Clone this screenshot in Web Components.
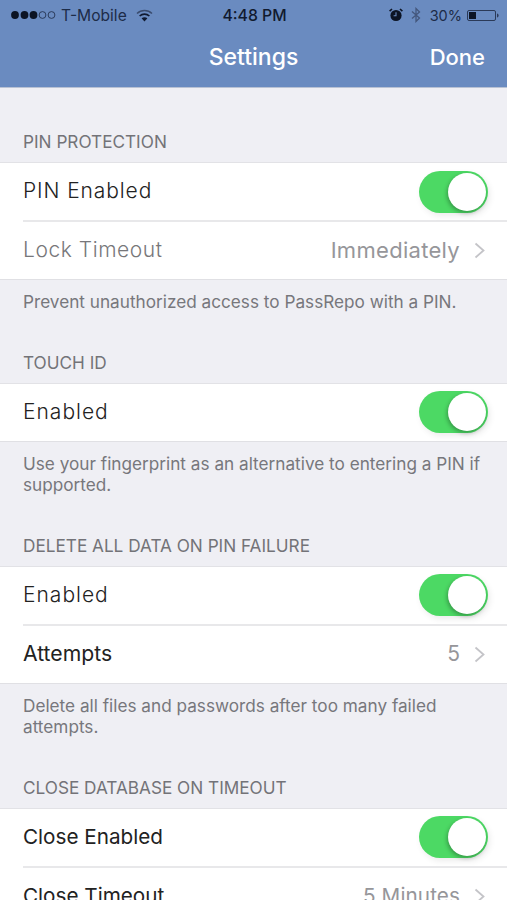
<!DOCTYPE html>
<html>
<head>
<meta charset="utf-8">
<style>
html, body { margin: 0; height: 900px; overflow: hidden; }
body { background: #efeff4; font-family: Inter, "Liberation Sans", sans-serif; }
</style>
</head>
<body>
<settings-screen>
  <nav-bar></nav-bar>
  <settings-section title="PIN PROTECTION" note="Prevent unauthorized access to PassRepo with a PIN." style="--top:44px">
    <settings-row label="PIN Enabled" toggle style="--label-size:21px;--label-ls:.9px;--label-weight:350"></settings-row>
    <settings-row label="Lock Timeout" value="Immediately" dim style="--label-size:21px;--label-ls:.55px;--label-weight:350;--value-size:22px;--value-ls:.3px"></settings-row>
  </settings-section>
  <settings-section title="TOUCH ID" note="Use your fingerprint as an alternative to entering a PIN if supported.">
    <settings-row label="Enabled" toggle style="--label-size:21px;--label-ls:1px;--label-weight:350"></settings-row>
  </settings-section>
  <settings-section title="DELETE ALL DATA ON PIN FAILURE" note="Delete all files and passwords after too many failed attempts.">
    <settings-row label="Enabled" toggle style="--label-size:21px;--label-ls:1px;--label-weight:350"></settings-row>
    <settings-row label="Attempts" value="5" style="--label-size:21.2px"></settings-row>
  </settings-section>
  <settings-section title="CLOSE DATABASE ON TIMEOUT">
    <settings-row label="Close Enabled" toggle></settings-row>
    <settings-row label="Close Timeout" value="5 Minutes" style="--value-size:20.7px"></settings-row>
  </settings-section>
</settings-screen>
<script>
class SettingsScreen extends HTMLElement {
    connectedCallback() {
        const shadow = this.attachShadow({mode:"open"});
        shadow.innerHTML = `
        <style>
        :host { display: flex; flex-direction: column; height: 900px; overflow: hidden; }
        </style>
        <slot></slot>
        `;
    }
}

class NavBar extends HTMLElement {
    connectedCallback() {
        const shadow = this.attachShadow({mode:"open"});
        shadow.innerHTML = `
        <style>
        :host { display: block; flex: none; height: 87px; background: #6a8bc0; border-bottom: 1px solid #b9c2d4; }
        .status { display: grid; grid-template-columns: 1fr auto 1fr; align-items: center; height: 30px; padding: 0 8px 0 10px; color: #16233c; font-size: 14.5px; }
        .left, .right { display: flex; align-items: center; }
        .right { justify-content: flex-end; }
        .carrier { margin-left: 5px; font-size: 15.6px; color: #1d2c48; }
        .wifi { margin-left: 9px; }
        .time { font-weight: 500; font-size: 15.8px; color: #111a2e; }
        .pct { margin: 0 5px 0 9px; color: #1d2c48; }
        .title { display: grid; grid-template-columns: 1fr auto 1fr; align-items: center; height: 54px; color: #fff; font-size: 23px; font-weight: 500; }
        .done { justify-self: end; padding-right: 22px; font-size: 22px; }
        svg { display: block; }
        </style>
        <div class="status">
          <div class="left">
            <svg width="46" height="10" viewBox="0 0 46 10">
              <circle cx="5" cy="5" r="3.9" fill="#0c1424"/><circle cx="14.5" cy="5" r="3.9" fill="#0c1424"/><circle cx="23.5" cy="5" r="3.9" fill="#0c1424"/>
              <circle cx="32.5" cy="5" r="3.4" fill="none" stroke="#24324f" stroke-width=".9"/><circle cx="41.5" cy="5" r="3.4" fill="none" stroke="#24324f" stroke-width=".9"/>
            </svg>
            <span class="carrier">T-Mobile</span>
            <svg class="wifi" width="17" height="13" viewBox="0 0 17 13">
              <path d="M1 4.5C5.2.6 11.8.6 16 4.5" fill="none" stroke="#3a4c6e" stroke-width="1.5"/>
              <path d="M3.6 7C6.4 4.5 10.6 4.5 13.4 7" fill="none" stroke="#101a30" stroke-width="1.6"/>
              <path d="M8.5 12.5L5.6 9.3C7.3 7.9 9.7 7.9 11.4 9.3Z" fill="#101a30"/>
            </svg>
          </div>
          <div class="time">4:48 PM</div>
          <div class="right">
            <svg width="14" height="14" viewBox="0 0 14 14">
              <circle cx="7" cy="7.5" r="5.6" fill="#0c1424"/>
              <path d="M7 4.2V7.8H4.6" fill="none" stroke="#6a8bc0" stroke-width="1.1"/>
              <path d="M.6 3.2L3 1M13.4 3.2L11 1" stroke="#0c1424" stroke-width="1.6"/>
            </svg>
            <svg style="margin-left:8px" width="10" height="16" viewBox="0 0 10 16">
              <path d="M1 4.5L8.5 11L5 14.5V1.5L8.5 5L1 11.5" fill="none" stroke="#44577c" stroke-width="1.3"/>
            </svg>
            <span class="pct">30%</span>
            <svg width="32" height="13" viewBox="0 0 32 13">
              <rect x=".5" y="1.5" width="28" height="10" rx="1.5" fill="none" stroke="#2b3a58"/>
              <rect x="2" y="3" width="7" height="7" fill="#0c1424"/>
              <path d="M30 4.6c1.1.2 1.6 1 1.6 1.9s-.5 1.7-1.6 1.9Z" fill="#2b3a58"/>
            </svg>
          </div>
        </div>
        <div class="title">
          <span></span>
          <span>Settings</span>
          <span class="done">Done</span>
        </div>
        `;
    }
}

class SettingsSection extends HTMLElement {
    connectedCallback() {
        let title = this.getAttribute("title");
        let note = this.getAttribute("note");
        this.removeAttribute("title");
        const shadow = this.attachShadow({mode:"open"});
        shadow.innerHTML = `
        <style>
        :host { display: block; flex: none; padding-top: var(--top, 40px); }
        .head { height: 20px; line-height: 20px; padding-left: 23px; color: #737378; font-size: 17.2px; margin-bottom: 10px; }
        .group { display: block; background: #fff; border-top: 1px solid #e2e2e6; border-bottom: 1px solid #e0e0e4; }
        .note { padding: 11px 10px 0 23px; color: #77777c; font-size: 17.2px; line-height: 21.5px; }
        </style>
        <div class="head">${title}</div>
        <div class="group"><slot></slot></div>
        ${note ? `<div class="note">${note}</div>` : ""}
        `;
    }
}

class SettingsRow extends HTMLElement {
    connectedCallback() {
        let label = this.getAttribute("label");
        let value = this.getAttribute("value");
        let toggle = this.hasAttribute("toggle");
        let dim = this.hasAttribute("dim");
        const shadow = this.attachShadow({mode:"open"});
        let right = "";
        if (toggle) {
            right = `<div class="switch"><div class="knob"></div></div>`;
        } else if (value) {
            right = `<span class="value">${value}</span>
            <svg width="11" height="17" viewBox="0 0 11 17"><path d="M1.5 1.5L9.5 8.5L1.5 15.5" fill="none" stroke="#c4c4c8" stroke-width="1.8"/></svg>`;
        }
        shadow.innerHTML = `
        <style>
        :host { display: block; padding-left: 23px; }
        :host(:not(:last-child)) .row { border-bottom: 2px solid #e8e8ea; }
        .row { display: flex; align-items: center; justify-content: space-between; height: 57px; padding-right: 19px; }
        .label { font-size: var(--label-size, 20.7px); letter-spacing: var(--label-ls, 0); font-weight: var(--label-weight, 400); margin-bottom: 2px; color: ${dim ? "#77777a" : "#222"}; }
        .right { display: flex; align-items: center; gap: 14px; }
        .value { font-size: var(--value-size, 21px); letter-spacing: var(--value-ls, .1px); margin-bottom: 2px; color: #96969a; }
        .right svg { margin-right: 3px; }
        .switch { position: relative; width: 69px; height: 42px; border-radius: 21px; background: #4cd964; box-shadow: 2px 3px 6px rgba(0,0,0,.08); }
        .knob { position: absolute; top: 2px; right: 2px; width: 38px; height: 38px; border-radius: 50%; background: #fff; box-shadow: -1px 2px 4px rgba(0,0,0,.3); }
        svg { display: block; }
        </style>
        <div class="row">
          <span class="label">${label}</span>
          <div class="right">${right}</div>
        </div>
        `;
    }
}

customElements.define("settings-screen", SettingsScreen);
customElements.define("nav-bar", NavBar);
customElements.define("settings-section", SettingsSection);
customElements.define("settings-row", SettingsRow);
</script>
</body>
</html>
